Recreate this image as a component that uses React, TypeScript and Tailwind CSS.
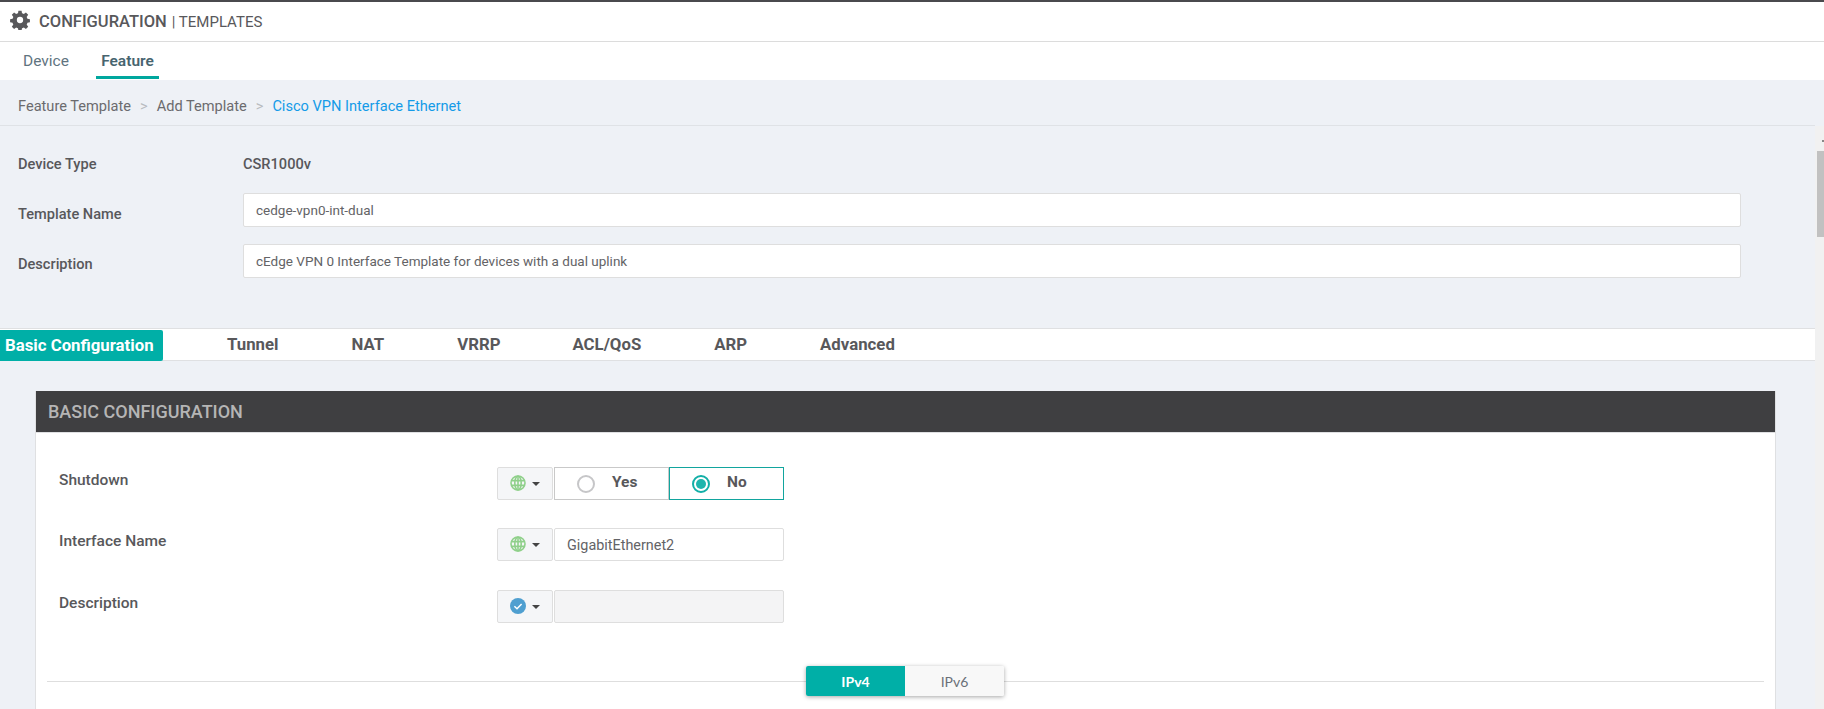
import React from "react";

const Globe = () => (
  <svg width="16" height="16" viewBox="0 0 16 16" fill="none" stroke="#8fd08a" strokeWidth="1.6">
    <circle cx="8" cy="8" r="7" />
    <ellipse cx="8" cy="8" rx="3.2" ry="7" />
    <path d="M8 1v14M1.4 5.6h13.2M1.4 10.4h13.2" />
  </svg>
);

const Check = () => (
  <svg width="16" height="16" viewBox="0 0 16 16">
    <circle cx="8" cy="8" r="8" fill="#4f9fd0" />
    <path d="M4.4 8.2l2.6 2.5 4.6-4.8" fill="none" stroke="#fff" strokeWidth="1.5" />
  </svg>
);

const Scope = ({ children }: { children: React.ReactNode }) => (
  <div className="w-[56px] h-full flex items-center justify-center gap-[6px] bg-[#f5f6f8] border border-[#dedede] rounded-[2px] shrink-0 pb-[2px]">
    {children}
    <span className="mt-[3px] w-0 h-0 border-l-[4px] border-r-[4px] border-t-[4px] border-l-transparent border-r-transparent border-t-[#444]" />
  </div>
);

const Row = ({ label, children }: { label: string; children: React.ReactNode }) => (
  <div className="flex h-[33px] items-start">
    <div className="w-[461px] pl-[23px] pt-[1px] text-[15.5px] font-medium text-[#58585b] leading-[24px]">{label}</div>
    <div className="flex h-full gap-[1px]">{children}</div>
  </div>
);

const tabs: [string, string][] = [
  ["Tunnel", "ml-[64px]"],
  ["NAT", "ml-[73px]"],
  ["VRRP", "ml-[73px]"],
  ["ACL/QoS", "ml-[72px]"],
  ["ARP", "ml-[73px]"],
  ["Advanced", "ml-[73px]"],
];

export default function App() {
  return (
    <div className="h-[709px] w-full overflow-hidden bg-white flex flex-col text-[#58585b] font-['Roboto',sans-serif]">
      <div className="h-[2px] shrink-0 bg-[#4a4a4d]" />
      <div className="h-[40px] shrink-0 flex items-center pl-[10px] border-b border-[#dcdcdc] pb-[3px]">
        <svg width="20" height="20" viewBox="0 0 24 24" fill="#58585b">
          <path fillRule="evenodd" d="M13.9 1l.5 3a8.4 8.4 0 0 1 2.2.9l2.5-1.8 2.7 2.7-1.8 2.5c.4.7.7 1.4.9 2.2l3 .5v3.8l-3 .5a8.4 8.4 0 0 1-.9 2.2l1.8 2.5-2.7 2.7-2.5-1.8a8.4 8.4 0 0 1-2.2.9l-.5 3h-3.8l-.5-3a8.4 8.4 0 0 1-2.2-.9l-2.5 1.8-2.7-2.7 1.8-2.5a8.4 8.4 0 0 1-.9-2.2l-3-.5v-3.8l3-.5c.2-.8.5-1.5.9-2.2L2.2 5.8l2.7-2.7 2.5 1.8a8.4 8.4 0 0 1 2.2-.9l.5-3h3.8zM12 8.2a3.8 3.8 0 1 0 0 7.6 3.8 3.8 0 0 0 0-7.6z" />
        </svg>
        <span className="ml-[9px] mt-[4px] text-[16.5px] font-medium">CONFIGURATION</span>
        <span className="ml-[5px] mt-[4px] text-[15px]">| TEMPLATES</span>
      </div>
      <div className="h-[38px] shrink-0 flex pl-[23px] text-[15.5px] bg-white">
        <div className="w-[46px] whitespace-nowrap text-[#5f7480] pt-[8px]">Device</div>
        <div className="ml-[27px] w-[63px] text-center font-semibold text-[#47646f] pt-[8px] h-[37px] border-b-[3px] border-[#00a79e]">Feature</div>
      </div>
      <div className="h-[46px] shrink-0 bg-[#eef1f6]">
        <div className="w-[1815px] h-full border-b border-[#dfe2e6] flex items-center pl-[18px] text-[14.6px] text-[#6b6b6e] pt-[9px]">
          <span>Feature Template</span>
          <span className="ml-[9px] text-[#b9bcc0]">&gt;</span>
          <span className="ml-[9px]">Add Template</span>
          <span className="ml-[9px] text-[#b9bcc0]">&gt;</span>
          <span className="ml-[9px] text-[#149be8]">Cisco VPN Interface Ethernet</span>
        </div>
      </div>
      <div className="flex-1 min-h-0 flex">
        <div className="flex-1 min-w-0 bg-[#eef1f6] flex flex-col">
          <div className="pl-[18px] pt-[26px] text-[14.6px]">
            <div className="flex h-[25px] items-center font-medium">
              <div className="w-[225px]">Device Type</div>
              <div>CSR1000v</div>
            </div>
            <div className="flex items-center mt-[16px] h-[34px]">
              <div className="w-[225px] font-medium pt-[9px]">Template Name</div>
              <div className="w-[1498px] h-full flex items-center pl-[12px] bg-white border border-[#dedede] rounded-[2px] text-[13.5px] text-[#636366]">cedge-vpn0-int-dual</div>
            </div>
            <div className="flex items-center mt-[17px] h-[34px]">
              <div className="w-[225px] font-medium pt-[8px]">Description</div>
              <div className="w-[1498px] h-full flex items-center pl-[12px] bg-white border border-[#dedede] rounded-[2px] text-[13.5px] text-[#636366]">cEdge VPN 0 Interface Template for devices with a dual uplink</div>
            </div>
          </div>
          <div className="mt-[50px] h-[33px] shrink-0 bg-white border-y border-[#dfe0e2] flex items-stretch text-[16.8px] font-bold text-[#58585b]">
            <div className="w-[163px] mt-[1px] -mb-[1px] bg-[#00afa7] text-white pl-[5px] rounded-r-[2px] flex items-center whitespace-nowrap">Basic Configuration</div>
            {tabs.map(([t, m]) => (
              <div key={t} className={`${m} flex items-center`}>{t}</div>
            ))}
          </div>
          <div className="mt-[30px] ml-[35px] w-[1741px] flex-1 bg-white border-r border-[#dfe0e2] border-l">
            <div className="h-[42px] bg-[#3f3f41] border-b border-[#dfe0e2] flex items-center pl-[12px] pb-[1px] text-[18px] font-medium text-[#b5b5b5]">BASIC CONFIGURATION</div>
            <div className="pt-[34px]">
              <Row label="Shutdown">
                <Scope><Globe /></Scope>
                <div className="w-[115px] flex items-center bg-white border border-[#c9c9c9] text-[15.5px]">
                  <span className="ml-[22px] w-[18px] h-[18px] rounded-full border-2 border-[#c6c6c8]" />
                  <span className="ml-[17px] pb-[2px] font-bold">Yes</span>
                </div>
                <div className="-ml-[1px] w-[115px] flex items-center bg-white border border-[#12a59e] text-[15.5px]">
                  <span className="ml-[22px] w-[18px] h-[18px] rounded-full border-2 border-[#12afa7] flex items-center justify-center">
                    <span className="w-[10px] h-[10px] rounded-full bg-[#1eb5ad]" />
                  </span>
                  <span className="ml-[17px] pb-[2px] font-bold">No</span>
                </div>
              </Row>
              <div className="mt-[28px]">
                <Row label="Interface Name">
                  <Scope><Globe /></Scope>
                  <div className="w-[230px] flex items-center pl-[12px] pt-[2px] bg-white border border-[#dedede] rounded-[2px] text-[14.4px] text-[#636366]">GigabitEthernet2</div>
                </Row>
              </div>
              <div className="mt-[29px]">
                <Row label="Description">
                  <Scope><Check /></Scope>
                  <div className="w-[230px] bg-[#f4f4f5] border border-[#dedede] rounded-[2px]" />
                </Row>
              </div>
              <div className="relative mt-[58px] mx-[11px] h-px bg-[#dedede]">
                <div className="absolute left-[759px] -top-[15px] flex h-[30px] text-[14px] font-['Lato',sans-serif] shadow-[0_1px_4px_rgba(0,0,0,0.35)] rounded-[2px]">
                  <div className="w-[99px] flex items-center justify-center bg-[#00afa7] text-white font-bold rounded-l-[2px]">IPv4</div>
                  <div className="w-[99px] flex items-center justify-center bg-[#f8f8f8] text-[#6b7078] rounded-r-[2px]">IPv6</div>
                </div>
              </div>
            </div>
          </div>
        </div>
        <div className="w-[9px] shrink-0 bg-[#f1f1f1] flex flex-col items-end">
          <div className="mt-[14px] w-[2px] h-[2px] bg-[#888888]" />
          <div className="mt-[9px] w-[7px] h-[86px] bg-[#c1c1c1]" />
        </div>
      </div>
    </div>
  );
}
